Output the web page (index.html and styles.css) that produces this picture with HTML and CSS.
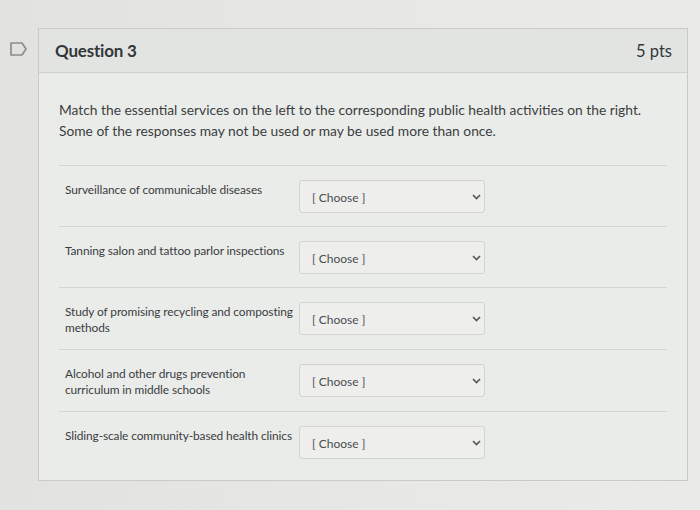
FILE: index.html
```html
<!DOCTYPE html>
<html>
<head>
<meta charset="utf-8">
<link rel="stylesheet" href="styles.css">
</head>
<body>
<div class="page">
  <div class="gutter">
    <svg class="flag" width="19" height="16" viewBox="0 0 19 16"><path d="M2 2 H13 L17 8 L13 14 H2 Z" fill="none" stroke="#8a8d8c" stroke-width="1.7" stroke-linejoin="round"/></svg>
  </div>
  <div class="card">
    <div class="card-head">
      <span class="q-title">Question 3</span>
      <span class="q-pts">5 pts</span>
    </div>
    <div class="card-body">
      <p class="prompt">Match the essential services on the left to the corresponding public health activities on the right. Some of the responses may not be used or may be used more than once.</p>
      <div class="matches">
        <div class="row">
          <div class="label">Surveillance of communicable diseases</div>
          <div class="select"><span>[ Choose ]</span><svg width="9" height="6" viewBox="0 0 9 6"><path d="M1 1 L4.5 4.5 L8 1" fill="none" stroke="#555" stroke-width="1.6"/></svg></div>
        </div>
        <div class="row">
          <div class="label">Tanning salon and tattoo parlor inspections</div>
          <div class="select"><span>[ Choose ]</span><svg width="9" height="6" viewBox="0 0 9 6"><path d="M1 1 L4.5 4.5 L8 1" fill="none" stroke="#555" stroke-width="1.6"/></svg></div>
        </div>
        <div class="row">
          <div class="label">Study of promising recycling and composting methods</div>
          <div class="select"><span>[ Choose ]</span><svg width="9" height="6" viewBox="0 0 9 6"><path d="M1 1 L4.5 4.5 L8 1" fill="none" stroke="#555" stroke-width="1.6"/></svg></div>
        </div>
        <div class="row">
          <div class="label">Alcohol and other drugs prevention<br>curriculum in middle schools</div>
          <div class="select"><span>[ Choose ]</span><svg width="9" height="6" viewBox="0 0 9 6"><path d="M1 1 L4.5 4.5 L8 1" fill="none" stroke="#555" stroke-width="1.6"/></svg></div>
        </div>
        <div class="row last">
          <div class="label">Sliding-scale community-based health clinics</div>
          <div class="select"><span>[ Choose ]</span><svg width="9" height="6" viewBox="0 0 9 6"><path d="M1 1 L4.5 4.5 L8 1" fill="none" stroke="#555" stroke-width="1.6"/></svg></div>
        </div>
      </div>
    </div>
  </div>
</div>
</body>
</html>
```
FILE: styles.css
```css
html, body {
  margin: 0;
  padding: 0;
}
body {
  background: linear-gradient(90deg, #e2e3e1 0%, #e8e9e7 60%, #eaebe9 100%);
  font-family: Lato, "Liberation Sans", sans-serif;
  color: #3a3d3f;
  width: 700px;
  height: 510px;
  overflow: hidden;
}
.page {
  display: flex;
  padding-top: 28px;
}
.gutter {
  width: 38px;
  flex: none;
  display: flex;
  justify-content: center;
  padding-top: 13px;
  box-sizing: border-box;
}
.flag {
  margin-left: -2px;
}
.card {
  width: 650px;
  border: 1px solid #c9cbc9;
  background: #eaecea;
  box-sizing: border-box;
  height: 453px;
}
.card-head {
  height: 43px;
  background: #e2e4e2;
  border-bottom: 1px solid #cfd1cf;
  display: flex;
  align-items: center;
  justify-content: space-between;
  padding: 0 15px 0 16px;
}
.q-title {
  font-size: 17px;
  font-weight: 700;
  color: #33373a;
  letter-spacing: -0.2px;
}
.q-pts {
  font-size: 16.5px;
  color: #33373a;
}
.card-body {
  padding: 26px 20px 0 20px;
}
.prompt {
  margin: 0 0 24px 0;
  font-size: 13.8px;
  line-height: 21px;
  color: #3b3e40;
}
.row {
  display: flex;
  align-items: flex-start;
  border-top: 1px solid #d4d6d4;
  padding: 14px 0 13px 6px;
}
.label {
  width: 234px;
  flex: none;
  font-size: 11.9px;
  line-height: 16px;
  padding-top: 2px;
  color: #3a3d3f;
  letter-spacing: -0.1px;
}
.select {
  width: 186px;
  height: 33px;
  box-sizing: border-box;
  border: 1px solid #d2d4d2;
  border-radius: 3px;
  background: #eeefed;
  display: flex;
  align-items: center;
  justify-content: space-between;
  padding: 0 3px 0 12px;
  font-size: 12px;
  color: #4a4d4f;
}
.select span {
  margin-top: 2px;
}
```
